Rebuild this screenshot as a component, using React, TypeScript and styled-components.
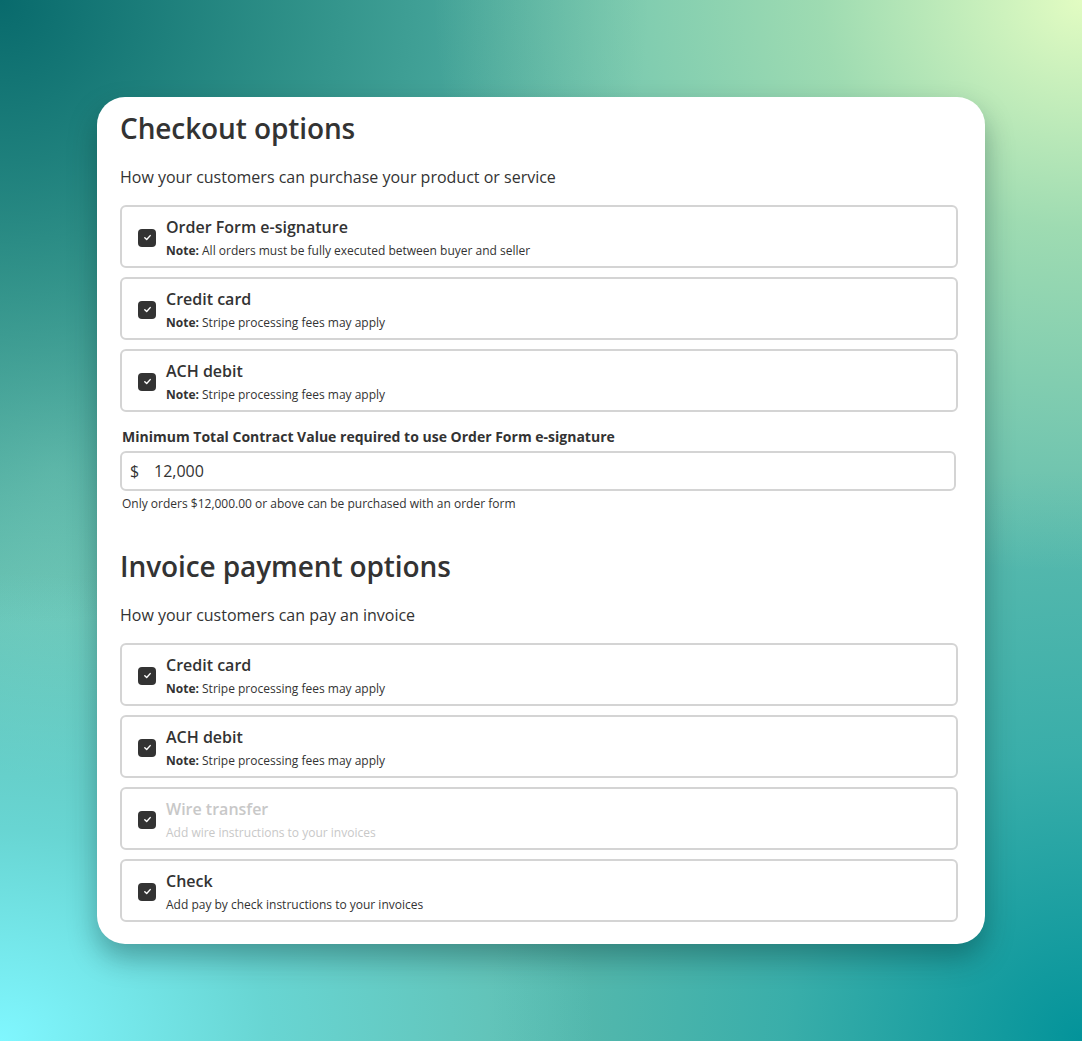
import styled, { createGlobalStyle } from "styled-components";

interface PaymentOption {
  title: string;
  note?: string;
  description?: string;
  disabled?: boolean;
}

const checkoutOptions: PaymentOption[] = [
  { title: "Order Form e-signature", note: "All orders must be fully executed between buyer and seller" },
  { title: "Credit card", note: "Stripe processing fees may apply" },
  { title: "ACH debit", note: "Stripe processing fees may apply" },
];

const invoiceOptions: PaymentOption[] = [
  { title: "Credit card", note: "Stripe processing fees may apply" },
  { title: "ACH debit", note: "Stripe processing fees may apply" },
  { title: "Wire transfer", description: "Add wire instructions to your invoices", disabled: true },
  { title: "Check", description: "Add pay by check instructions to your invoices" },
];

function CheckIcon() {
  return (
    <svg width="9" height="9" viewBox="0 0 10 10" fill="none">
      <path d="M2 5.2 L4.1 7.2 L8 2.9" stroke="#fff" strokeWidth="1.6" strokeLinecap="round" strokeLinejoin="round" />
    </svg>
  );
}

function OptionRow({ option }: { option: PaymentOption }) {
  return (
    <OptionBox>
      <Checkbox>
        <CheckIcon />
      </Checkbox>
      <OptionText>
        <OptionTitle disabled={option.disabled}>{option.title}</OptionTitle>
        <OptionNote disabled={option.disabled}>
          {option.note ? (
            <>
              <strong>Note:</strong> {option.note}
            </>
          ) : (
            option.description
          )}
        </OptionNote>
      </OptionText>
    </OptionBox>
  );
}

export default function App() {
  return (
    <>
      <GlobalStyle />
      <Page>
        <Card>
          <Title>Checkout options</Title>
          <Subtitle>How your customers can purchase your product or service</Subtitle>
          <OptionList>
            {checkoutOptions.map((o) => (
              <OptionRow key={o.title} option={o} />
            ))}
          </OptionList>

          <Field>
            <FieldLabel>Minimum Total Contract Value required to use Order Form e-signature</FieldLabel>
            <InputBox>
              <Currency>$</Currency>
              <InputValue>12,000</InputValue>
            </InputBox>
            <Helper>Only orders $12,000.00 or above can be purchased with an order form</Helper>
          </Field>

          <Title second>Invoice payment options</Title>
          <Subtitle>How your customers can pay an invoice</Subtitle>
          <OptionList>
            {invoiceOptions.map((o) => (
              <OptionRow key={o.title} option={o} />
            ))}
          </OptionList>
        </Card>
      </Page>
    </>
  );
}

const GlobalStyle = createGlobalStyle`
  html, body {
    margin: 0;
    padding: 0;
  }
  body {
    font-family: "Open Sans", "Noto Sans", sans-serif;
    color: #333;
  }
`;

const Page = styled.div`
  width: 1082px;
  height: 1041px;
  box-sizing: border-box;
  padding: 97px 97px 0 97px;
  overflow: hidden;
  background:
    radial-gradient(ellipse 60% 55% at 100% 0%, #e2fcc2 0%, rgba(200, 240, 180, 0.6) 40%, rgba(160, 220, 170, 0) 100%),
    radial-gradient(ellipse 55% 45% at 0% 100%, #80f7ff 0%, rgba(110, 230, 235, 0.6) 45%, rgba(100, 220, 225, 0) 100%),
    radial-gradient(ellipse 55% 55% at 100% 100%, #03939a 0%, rgba(20, 160, 165, 0.5) 50%, rgba(30, 170, 170, 0) 100%),
    radial-gradient(ellipse 60% 60% at 0% 0%, #086a6c 0%, rgba(20, 120, 115, 0.65) 45%, rgba(40, 140, 130, 0) 100%),
    radial-gradient(ellipse 20% 30% at 5% 45%, rgba(140, 220, 200, 0.6) 0%, rgba(140, 220, 200, 0) 100%),
    #5fbcae;
`;

const Card = styled.div`
  width: 888px;
  box-sizing: border-box;
  background: #fff;
  border-radius: 28px;
  padding: 11px 27px 22px 23px;
  box-shadow: 0 14px 28px rgba(0, 40, 40, 0.35);
`;

const Title = styled.h2<{ second?: boolean }>`
  margin: ${({ second }) => (second ? "34px 0 0" : "0")};
  font-size: 28px;
  font-weight: 600;
  line-height: 40px;
  color: #333;
  letter-spacing: -0.1px;
`;

const Subtitle = styled.p`
  margin: 18px 0 17px;
  font-size: 16px;
  line-height: 22px;
  color: #333;
`;

const OptionList = styled.div`
  display: flex;
  flex-direction: column;
  gap: 9px;
`;

const OptionBox = styled.div`
  height: 63px;
  box-sizing: border-box;
  border: 2px solid #d4d4d4;
  border-radius: 6px;
  display: flex;
  align-items: center;
  padding: 0 16px;
  gap: 10px;
`;

const Checkbox = styled.span`
  width: 18px;
  height: 18px;
  flex: none;
  border-radius: 4px;
  background: #333;
  display: flex;
  align-items: center;
  justify-content: center;
  margin-top: 2px;
`;

const OptionText = styled.div`
  display: flex;
  flex-direction: column;
  gap: 6px;
  margin-top: 3px;
`;

const OptionTitle = styled.span<{ disabled?: boolean }>`
  font-size: 16px;
  font-weight: 600;
  line-height: 20px;
  color: ${({ disabled }) => (disabled ? "#c8c8c8" : "#333")};
`;

const OptionNote = styled.span<{ disabled?: boolean }>`
  font-size: 12px;
  line-height: 16px;
  color: ${({ disabled }) => (disabled ? "#c8c8c8" : "#333")};

  strong {
    font-weight: 700;
  }
`;

const Field = styled.div`
  margin-top: 15px;
  display: flex;
  flex-direction: column;
`;

const FieldLabel = styled.label`
  font-size: 14px;
  font-weight: 700;
  line-height: 19px;
  padding-left: 2px;
  color: #333;
`;

const InputBox = styled.div`
  margin-top: 5px;
  height: 40px;
  box-sizing: border-box;
  border: 2px solid #d4d4d4;
  border-radius: 6px;
  display: flex;
  align-items: center;
  padding: 0 8px;
  margin-right: 2px;
  font-size: 16px;
  color: #333;
`;

const Currency = styled.span`
  width: 24px;
`;

const InputValue = styled.span``;

const Helper = styled.span`
  margin-top: 4px;
  padding-left: 2px;
  font-size: 12px;
  line-height: 17px;
  color: #333;
`;
